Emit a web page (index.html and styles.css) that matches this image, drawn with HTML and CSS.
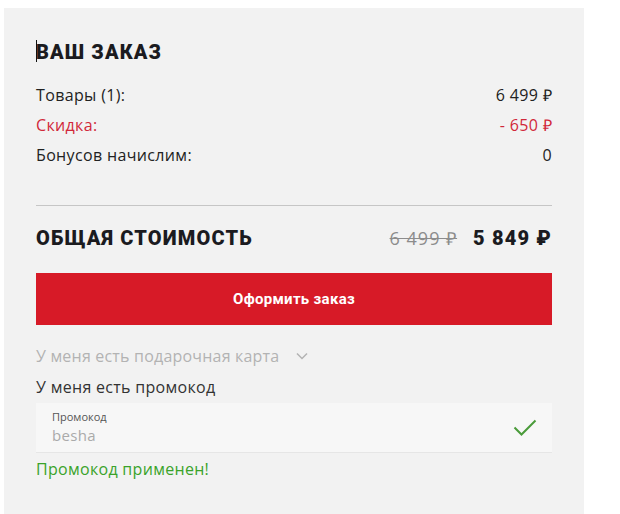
FILE: index.html
```html
<!DOCTYPE html>
<html lang="ru">
<head>
    <meta charset="UTF-8">
    <meta name="viewport" content="width=device-width, initial-scale=1.0">
    <title>Ваш заказ</title>
    <link rel="stylesheet" href="styles.css">
</head>
<body>
    <div class="order-summary">
        <h2 class="summary-title"><span class="caret"></span>ВАШ ЗАКАЗ</h2>

        <div class="summary-rows">
            <div class="summary-row">
                <span>Товары (1):</span>
                <span>6 499 ₽</span>
            </div>
            <div class="summary-row discount">
                <span>Скидка:</span>
                <span>- 650 ₽</span>
            </div>
            <div class="summary-row">
                <span>Бонусов начислим:</span>
                <span>0</span>
            </div>
        </div>

        <div class="summary-total">
            <span class="total-label">ОБЩАЯ СТОИМОСТЬ</span>
            <span class="total-prices">
                <span class="old-price">6 499 ₽</span>
                <span class="new-price">5 849 ₽</span>
            </span>
        </div>

        <a href="#" class="checkout-btn">Оформить заказ</a>

        <div class="gift-card">
            У меня есть подарочная карта
            <svg width="14" height="14" viewBox="0 0 14 14" fill="none" stroke="currentColor" stroke-width="1.5">
                <path d="M2 4.5l5 5 5-5"></path>
            </svg>
        </div>

        <div class="promo-title">У меня есть промокод</div>

        <div class="promo-field">
            <div class="promo-text">
                <label for="promo">Промокод</label>
                <input type="text" id="promo" value="besha" readonly>
            </div>
            <svg class="promo-check" width="24" height="18" viewBox="0 0 24 18" fill="none" stroke="currentColor" stroke-width="2">
                <path d="M1.5 8.5l7 7 14-14"></path>
            </svg>
        </div>

        <div class="promo-success">Промокод применен!</div>
    </div>
</body>
</html>
```

FILE: styles.css
```css
* {
    margin: 0;
    padding: 0;
    box-sizing: border-box;
}

body {
    background-color: #ffffff;
    font-family: 'Open Sans', 'Liberation Sans', sans-serif;
    color: #222;
    height: 100vh;
    padding: 8px 36px 0 4px;
}

.order-summary {
    background-color: #f2f2f2;
    width: 580px;
    height: 100%;
    padding: 32px 32px 0;
}

.summary-title {
    position: relative;
    font-family: 'Roboto', sans-serif;
    font-weight: 900;
    font-size: 20px;
    line-height: 24px;
    letter-spacing: 1.1px;
    color: #1b1b1f;
    margin-bottom: 16px;
}

.caret {
    position: absolute;
    left: 0;
    top: 0;
    width: 1px;
    height: 22px;
    background-color: #111;
}

.summary-row {
    display: flex;
    justify-content: space-between;
    font-size: 16px;
    line-height: 30px;
    height: 30px;
    letter-spacing: 0.35px;
    color: #222;
}

.summary-row.discount {
    color: #d1283a;
}

.summary-total {
    display: flex;
    justify-content: space-between;
    align-items: center;
    border-top: 1px solid #c6c6c6;
    margin-top: 35px;
    padding-top: 18px;
    height: 47px;
    font-family: 'Roboto', sans-serif;
    font-weight: 900;
    font-size: 20px;
    letter-spacing: 1.15px;
    color: #1b1b1f;
}

.total-prices {
    display: flex;
    align-items: center;
    gap: 16px;
}

.old-price {
    font-family: 'Open Sans', sans-serif;
    font-weight: 400;
    font-size: 18px;
    letter-spacing: 1px;
    color: #8c8c8c;
    text-decoration: line-through;
}

.checkout-btn {
    display: block;
    margin-top: 21px;
    height: 52px;
    line-height: 52px;
    background-color: #d71a27;
    color: #fff;
    text-align: center;
    text-decoration: none;
    font-family: 'Roboto', sans-serif;
    font-weight: 700;
    font-size: 15px;
    letter-spacing: 0.3px;
}

.gift-card {
    display: flex;
    align-items: center;
    gap: 16px;
    margin-top: 19px;
    font-size: 16px;
    line-height: 24px;
    letter-spacing: 0.2px;
    color: #b3b3b3;
}

.promo-title {
    margin-top: 7px;
    font-size: 16px;
    line-height: 24px;
    letter-spacing: 0.3px;
    color: #333;
}

.promo-field {
    display: flex;
    align-items: center;
    justify-content: space-between;
    margin-top: 4px;
    height: 50px;
    padding: 0 15px 0 16px;
    background-color: #f7f7f7;
    border-bottom: 1px solid #e6e6e6;
}

.promo-text label {
    display: block;
    font-size: 11px;
    line-height: 14px;
    color: #555;
}

.promo-text input {
    border: none;
    outline: none;
    background: transparent;
    font-family: 'Open Sans', sans-serif;
    font-size: 15px;
    line-height: 20px;
    letter-spacing: 0.3px;
    color: #aaa;
}

.promo-check {
    color: #4a9b3a;
}

.promo-success {
    margin-top: 4px;
    font-size: 16px;
    line-height: 24px;
    letter-spacing: 0.3px;
    color: #3aa32a;
}
```
